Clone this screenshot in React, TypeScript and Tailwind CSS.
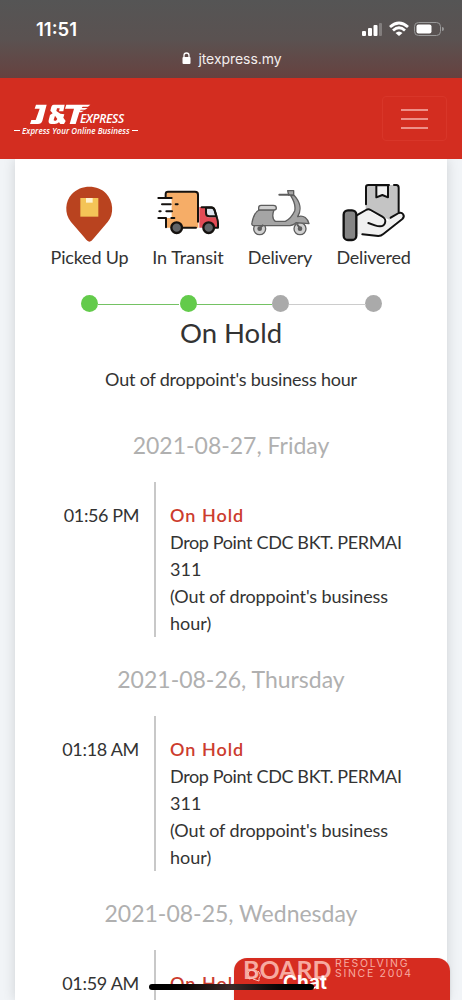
import type { ReactNode } from 'react'

type Step = { label: string; width: string; spacing: string; nudge: string; dot: string; icon: ReactNode }
type Entry = { date: string; time: string; timeSpacing: string }

const ENTRIES: Entry[] = [
  { date: '2021-08-27, Friday', time: '01:56 PM', timeSpacing: 'tracking-[-0.400px]' },
  { date: '2021-08-26, Thursday', time: '01:18 AM', timeSpacing: 'tracking-[-0.300px]' },
  { date: '2021-08-25, Wednesday', time: '01:59 AM', timeSpacing: 'tracking-[-0.300px]' },
]

function PinIcon() {
  return (
    <svg width="95" height="75" viewBox="0 0 285 225">
      <path d="M148 200C141 199 136 191 130 184L93 141C72 116 76 78 95 58C122 29 172 28 199 56C219 77 224 116 203 141L164 187C157 195 154 200 148 200Z" fill="#b9431f" />
      <path d="M121 69H175V125H121Z" fill="#f4c457" />
      <path d="M138 69H158V83H138Z" fill="#fff3d0" />
    </svg>
  )
}

function TruckIcon() {
  return (
    <svg width="90" height="75" viewBox="0 0 270 225" fill="none" stroke="#15120f" strokeWidth="6" strokeLinecap="round" strokeLinejoin="round">
      <path d="M64 50H160V158H64V129H80V70H64Z" fill="#f6ad67" stroke="none" />
      <path d="M163 96H189L181 116L188 127H216L219 158H163Z" fill="#e24b55" stroke="none" />
      <path d="M183 98H199Q207 98 209 106L214 124H193Q183 124 183 114Z" fill="#dfe5ee" />
      <path d="M62 65V57Q62 50 69 50H150Q159 50 159 59V140M63 157V129H40M40 69H80M51 88H77M92 88H98M43 109H47M64 109H81M79 129H88M113 158H153M170 97H199Q206 97 209 106L217 132Q219 138 219 145V158H210" />
      <circle cx="95" cy="158" r="16" fill="#626568" strokeWidth="7" />
      <circle cx="191" cy="158" r="16" fill="#626568" strokeWidth="7" />
    </svg>
  )
}

function ScooterIcon() {
  return (
    <svg width="80" height="75" viewBox="0 0 240 225" fill="none" stroke="#5e5e5e" strokeWidth="4" strokeLinecap="round" strokeLinejoin="round">
      <circle cx="59" cy="161" r="18" fill="#d0d0d0" />
      <circle cx="180" cy="161" r="18" fill="#d0d0d0" />
      <path d="M152 62L162 61C180 80 186 104 173 125C192 119 203 131 207 146L168 143Q159 152 142 152H40Q34 151 36 143C40 122 48 108 60 104H102Q93 130 106 139H136Q153 131 164 108C168 91 161 76 152 62Z" fill="#a5a5a5" />
      <path d="M56 98Q56 91 63 91H100Q109 91 109 99Q109 105 102 105H56Z" fill="#d0d0d0" />
      <path d="M143 47H161V60H146Z" fill="#a5a5a5" />
      <path d="M118 59H147" strokeWidth="6" />
      <circle cx="59" cy="161" r="5" fill="#5e5e5e" />
      <circle cx="180" cy="161" r="5" fill="#5e5e5e" />
      <path d="M59 160L68 151M180 160L173 150" strokeWidth="6" />
    </svg>
  )
}

function HandIcon() {
  return (
    <svg width="90" height="75" viewBox="0 0 270 225" fill="none" stroke="#111" strokeWidth="6" strokeLinecap="round" strokeLinejoin="round">
      <path d="M107 30H206V121L178 134L116 105H107Z" fill="#c4c4c4" stroke="none" />
      <path d="M79 120L109 104L154 128L170 140L207 116L221 122L146 183L79 177Z" fill="#f1f1f1" stroke="none" />
      <path d="M108 88V37Q108 30 115 30H177M192 30H199Q206 30 206 38V111" />
      <path d="M139 31H174V67L157 60L139 67Z" fill="#f1f1f1" />
      <path d="M80 121L108 105Q115 101 122 105L157 125C164 129 168 137 165 144C160 158 147 155 135 151L115 144M182 128L206 114C217 110 227 122 217 132L160 177Q153 183 145 183L97 178" />
      <rect x="41" y="106" width="38" height="89" rx="13" fill="#858585" strokeWidth="7" />
    </svg>
  )
}

const STEPS: Step[] = [
  { label: 'Picked Up', width: 'w-[101px]', spacing: 'tracking-[-0.200px]', nudge: 'pr-[4px]', dot: 'bg-[#63cb4b]', icon: <PinIcon /> },
  { label: 'In Transit', width: 'w-[96px]', spacing: 'tracking-[0px]', nudge: 'pl-[4px]', dot: 'bg-[#63cb4b]', icon: <TruckIcon /> },
  { label: 'Delivery', width: 'w-[88px]', spacing: 'tracking-[-0.200px]', nudge: 'pl-0', dot: 'bg-[#aaa]', icon: <ScooterIcon /> },
  { label: 'Delivered', width: 'w-[99px]', spacing: 'tracking-[-0.200px]', nudge: 'pl-[3px]', dot: 'bg-[#aaa]', icon: <HandIcon /> },
]

function StatusBar() {
  return (
    <header className="h-[78px] shrink-0 bg-gradient-to-b from-[#555] via-[#5a5251] to-[#66413f] text-white font-['Inter',sans-serif]">
      <div className="flex h-[48px] items-center justify-between pl-[36px] pr-[17px] pt-[9px]">
        <span className="text-[18.500px] font-semibold leading-6">11:51</span>
        <svg width="84" height="16" viewBox="0 0 84 16" fill="#fff">
          <rect x="1" y="10" width="4" height="5" rx="1" />
          <rect x="7" y="7" width="4" height="8" rx="1" />
          <rect x="12.500" y="4" width="4" height="11" rx="1" />
          <rect x="18" y="2" width="3" height="13" rx="1" opacity=".25" />
          <g fill="none" stroke="#fff" strokeWidth="2.800">
            <path d="M29 6Q38 -2 47 6M32 9.500Q38 4 44 9.500" />
          </g>
          <path d="M34.500 12Q38 9 41.500 12L38 15Z" />
          <rect x="53.500" y="1.500" width="26" height="13" rx="4" fill="none" stroke="#999" />
          <rect x="55.500" y="3.500" width="15" height="9" rx="2" />
          <path d="M81 6Q83 6 83 8T81 10Z" fill="#999" />
        </svg>
      </div>
      <div className="flex h-[20px] items-center justify-center pl-[2px] text-[14px] text-[#f3eeee]">
        <svg className="mr-[7px]" width="9" height="12" viewBox="0 0 9 12">
          <path d="M2 6V3.500a2.500 2.500 0 0 1 5 0V6" fill="none" stroke="#fff" strokeWidth="1.300" />
          <rect x=".5" y="5" width="8" height="7" rx="1" fill="#fff" />
        </svg>
        <span className="tracking-[-0.050px]">jtexpress.my</span>
      </div>
    </header>
  )
}

function NavBar() {
  return (
    <nav className="relative z-10 flex h-[81px] shrink-0 items-center justify-between bg-[#d32d20] pl-[14px] pr-[15px] text-white">
      <div className="w-[126px] font-['Open_Sans',sans-serif] italic">
        <div className="flex h-[24px] items-end pl-[16px]">
          <svg width="62" height="22" viewBox="0 0 186 66" fill="#fff">
            <path d="M18 5H50L37 54Q34 63 24 63H0L4 51H17L29 17H14Z" />
            <path d="M71 5H104L100 25H87L89 16H81L79 24L91 32L103 34L100 44L107 54L102 63H91L87 58Q82 63 74 63H64Q54 63 56 52L60 36L68 31L61 23L64 11Q66 5 71 5ZM75 38L71 51Q71 54 78 53L82 48Z" fillRule="evenodd" />
            <path d="M109 5H181L174 11H158L155 15H173L165 20H152L150 23H162L154 28H148L137 63H119L132 17H105Z" />
          </svg>
          <span className="-ml-[12px] -mb-px text-[12px] font-semibold leading-[15px] tracking-[-0.300px]">EXPRESS</span>
        </div>
        <div className="flex items-center gap-[2px] whitespace-nowrap text-[8px] font-semibold leading-[12px]">
          <i className="h-px w-[6px] bg-white" />
          <span className="tracking-[0.050px]">Express Your Online Business</span>
          <i className="h-px w-[6px] bg-white" />
        </div>
      </div>
      <button className="flex h-[45px] w-[65px] flex-col items-center justify-center gap-[7px] rounded-[4px] border border-[#d83629]">
        <span className="h-[2px] w-[27px] bg-[#ee9088]" />
        <span className="h-[2px] w-[27px] bg-[#ee9088]" />
        <span className="h-[2px] w-[27px] bg-[#ee9088]" />
      </button>
    </nav>
  )
}

function Progress() {
  return (
    <div className="pl-[24px] pt-[16px]">
      <div className="flex">
        {STEPS.map((step) => (
          <div key={step.label} className={`flex flex-col items-center ${step.width}`}>
            <div className={`h-[69px] ${step.nudge}`}>{step.icon}</div>
            <span className={`whitespace-nowrap leading-[27px] ${step.spacing}`}>{step.label}</span>
            <span className={`mt-[24px] size-[17px] rounded-full ${step.dot}`} />
          </div>
        ))}
      </div>
      <div className="-mt-[8px] ml-[59px] flex h-[9px]">
        <span className="h-px w-[81px] bg-[#74c263]" />
        <span className="ml-[17px] h-px w-[76px] bg-[#74c263]" />
        <span className="ml-[17px] h-px w-[77px] bg-[#ccc]" />
      </div>
    </div>
  )
}

function DayEntry({ entry }: { entry: Entry }) {
  return (
    <section className="h-[234px]">
      <h2 className="h-[54px] text-center text-[23px] leading-[34px] text-[#b0b0b0]">{entry.date}</h2>
      <div className="flex h-[155px]">
        <div className={`w-[124px] pt-[20px] text-right ${entry.timeSpacing}`}>{entry.time}</div>
        <div className="ml-[15px] w-[2px] bg-[#c8c8c8]" />
        <div className="whitespace-nowrap pl-[14px] pt-[20px]">
          <div className="font-semibold tracking-[1px] text-[#cc3c2e]">On Hold</div>
          <div className="tracking-[-0.360px]">Drop Point CDC BKT. PERMAI</div>
          <div>311</div>
          <div className="tracking-[-0.120px]">(Out of droppoint's business</div>
          <div>hour)</div>
        </div>
      </div>
    </section>
  )
}

function ChatButton() {
  return (
    <div className="absolute left-[234px] top-[958px] h-[42px] w-[216px] rounded-t-[13px] bg-[#d62c20] font-['Inter',sans-serif] text-white shadow">
      <div className="absolute left-[9px] top-[1px] flex text-[#f7aaa0]">
        <span className="w-[92px] font-['Lato',sans-serif] text-[25px] font-bold leading-[20px]">BOARD</span>
        <span className="whitespace-nowrap text-[10.500px] leading-[10px] tracking-[1.700px]">RESOLVING<br />SINCE 2004</span>
      </div>
      <svg className="absolute left-[12px] top-[9px]" width="16" height="16" viewBox="0 0 16 16" fill="none" stroke="#f9c7c0">
        <path d="M2 7a4 4 0 1 1 5 4L3 12V9ZM12 4Q16 8 13 11V14L7 12" />
      </svg>
      <span className="absolute left-[49px] top-[13px] text-[19px] font-bold leading-6">Chat</span>
    </div>
  )
}

export default function App() {
  return (
    <div className="relative flex h-[1000px] w-[462px] flex-col overflow-hidden bg-[#f1f4f7] font-['Lato',sans-serif] text-[18px] leading-[27px] text-[#333]">
      <StatusBar />
      <NavBar />
      <main className="mx-[15px] h-[841px] shrink-0 overflow-hidden bg-white shadow-[0_0_12px_rgba(0,0,0,0.14)]">
        <Progress />
        <h1 className="text-center text-[27.500px] leading-[39px]">On Hold</h1>
        <p className="mb-[35px] mt-[14px] text-center tracking-[-0.200px]">Out of droppoint's business hour</p>
        {ENTRIES.map((entry) => (
          <DayEntry key={entry.date} entry={entry} />
        ))}
      </main>
      <ChatButton />
      <div className="absolute left-[149px] top-[984px] h-[6px] w-[165px] rounded-full bg-gradient-to-r from-black via-[#3b2a29] to-black" />
    </div>
  )
}
